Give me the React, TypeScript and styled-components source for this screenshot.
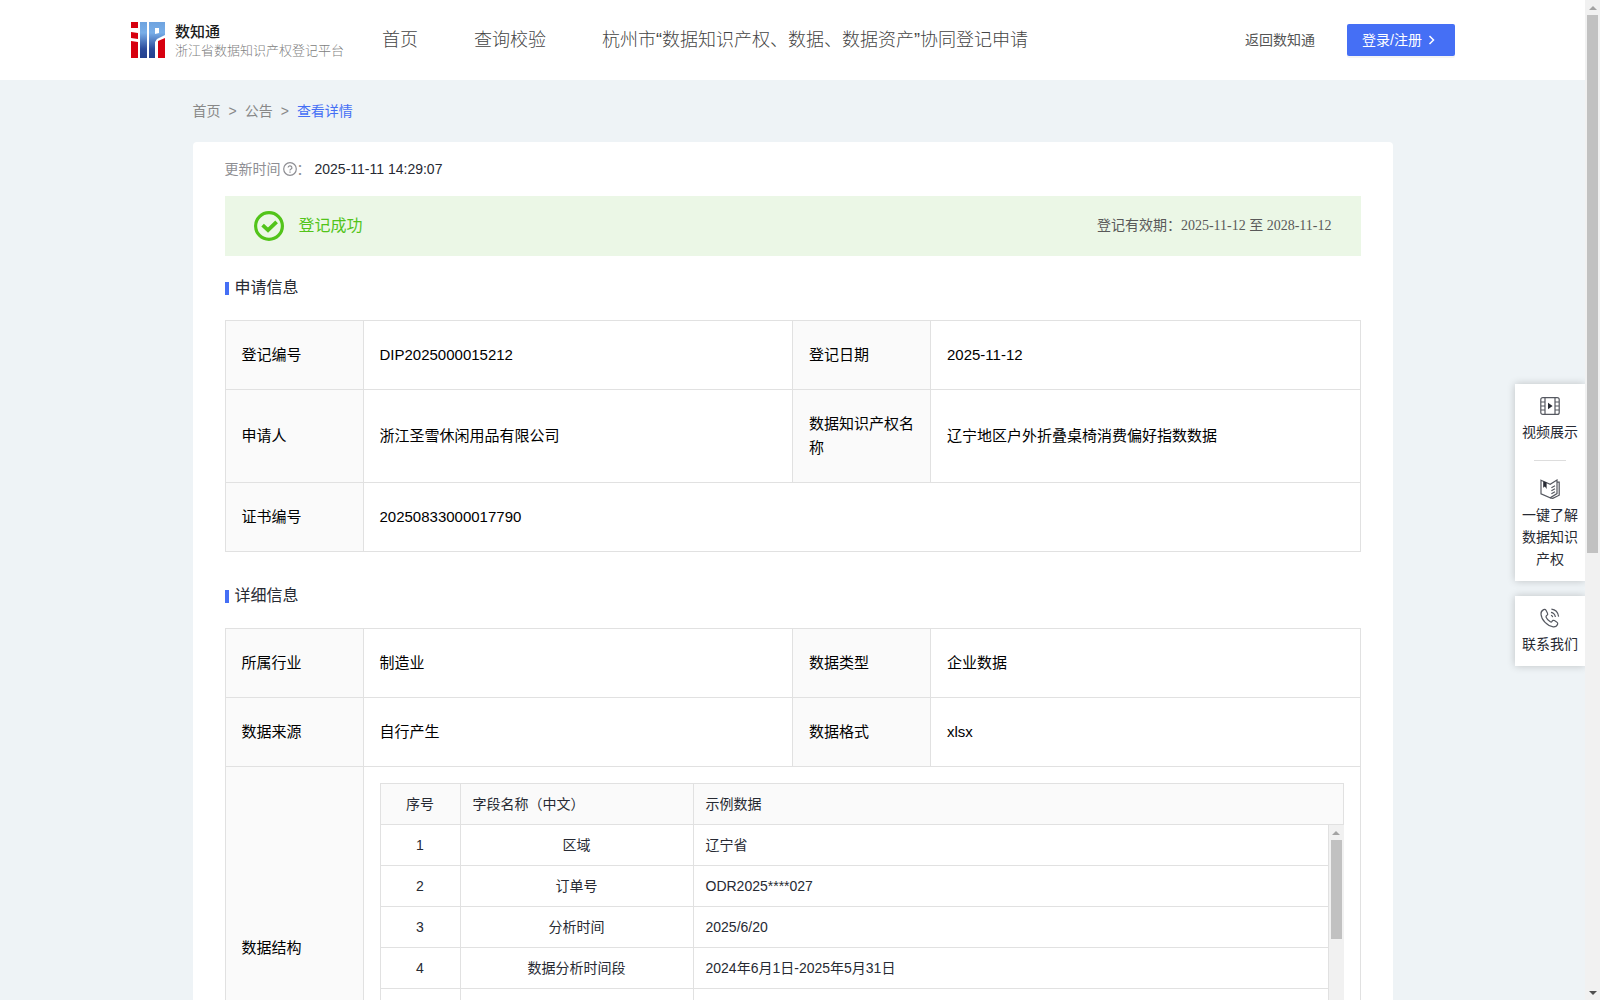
import React from 'react';
import styled, { createGlobalStyle } from 'styled-components';

const sans = '"Liberation Sans", "Noto Sans CJK SC", sans-serif';
const serif = '"Liberation Serif", "Noto Sans CJK SC", serif';
const ink = '#272a33';
const line = '#e1e1e1';
const blue = '#456ff5';

const GlobalStyle = createGlobalStyle`
  * { box-sizing: border-box; }
  body { margin: 0; font-family: ${sans}; font-size: 14px; line-height: 22px; color: ${ink}; }
  a { color: inherit; text-decoration: none; }
  table { border-collapse: collapse; table-layout: fixed; width: 100%; }
`;

const Shell = styled.div`
  position: relative;
  display: flex;
  height: 100vh;
  overflow: hidden;
  background: #eef3f6;
`;
const Page = styled.div`
  flex: 1;
  min-width: 0;
  overflow-y: auto;
  scrollbar-width: none;
`;
const Header = styled.header`
  display: flex;
  align-items: center;
  height: 80px;
  padding: 0 130px;
  background: #fff;
`;
const Brand = styled.a`
  display: flex;
  align-items: center;
  gap: 9px;
`;
const BrandText = styled.span`
  display: flex;
  flex-direction: column;
  width: 163px;
  white-space: nowrap;
`;
const BrandName = styled.span`
  font: 500 15px/20px "Noto Sans CJK SC", sans-serif;
  color: #1b1b1b;
`;
const BrandSub = styled.span`
  font: 300 13px/18px "Noto Sans CJK SC", sans-serif;
  color: #808080;
`;
const Nav = styled.nav`
  display: flex;
  gap: 56px;
  margin-left: 44px;
  font-size: 18px;
  font-weight: 300;
  line-height: 28px;
  color: #444;
  white-space: nowrap;
`;
const Actions = styled.div`
  display: flex;
  align-items: center;
  gap: 32px;
  margin-left: auto;
  color: #555;
`;
const LoginButton = styled.button`
  display: flex;
  align-items: center;
  gap: 2px;
  height: 32px;
  padding: 0 15px;
  border: 0;
  border-radius: 2px;
  background: ${blue};
  box-shadow: 0 2px 0 rgba(0, 0, 0, 0.045);
  color: #fff;
  font: 400 14px/22px ${sans};
`;
const Content = styled.main`
  width: 1200px;
  max-width: 100%;
  margin: 0 auto;
`;
const Breadcrumb = styled.nav`
  display: flex;
  gap: 8px;
  padding: 20px 0;
  color: #888;
`;
const Current = styled.a`
  && { color: ${blue}; }
`;
const Card = styled.section`
  padding: 16px 32px 32px;
  border-radius: 4px;
  background: #fff;
`;
const Updated = styled.div`
  display: flex;
  align-items: center;
  margin-bottom: 16px;
  color: #8e8e93;
  svg { margin-left: 2px; }
`;
const UpdatedValue = styled.span`
  margin-left: 4px;
  color: ${ink};
`;
const Banner = styled.div`
  display: flex;
  align-items: center;
  gap: 15px;
  height: 60px;
  padding: 0 29px;
  background: #ebf7e6;
  color: #52c41a;
  font-size: 16px;
`;
const Validity = styled.span`
  margin-left: auto;
  font: 400 14px/22px ${serif};
  color: #595959;
`;
const SectionTitle = styled.h2`
  display: flex;
  align-items: center;
  gap: 6px;
  margin: ${(p: { $first?: boolean }) => (p.$first ? '20px' : '32px')} 0 20px;
  font-size: 16px;
  font-weight: 400;
  line-height: 24px;
  &::before {
    content: "";
    width: 4px;
    height: 13px;
    background: ${blue};
  }
`;
const InfoTable = styled.table`
  color: #000;
  font-size: 15px;
  line-height: 24px;
`;
const LabelCell = styled.th`
  padding: 22px 16px;
  border: 1px solid ${line};
  background: #fafafa;
  font-weight: 400;
  text-align: left;
`;
const ValueCell = styled.td`
  padding: ${(p: { $nested?: boolean }) => (p.$nested ? '16px' : '22px 16px')};
  border: 1px solid ${line};
`;
const FieldTable = styled.table`
  color: ${ink};
  font-size: 14px;
  line-height: 22px;
`;
const FieldHead = styled.th`
  height: 41px;
  padding: 0 12px;
  border: 1px solid ${line};
  background: #fafafa;
  font-weight: 400;
  text-align: ${(p: { $center?: boolean }) => (p.$center ? 'center' : 'left')};
`;
const FieldCell = styled.td`
  height: 41px;
  padding: 0 12px;
  border: 1px solid ${line};
  border-top: 0;
  text-align: ${(p: { $center?: boolean }) => (p.$center ? 'center' : 'left')};
  tr:first-child > & { height: 40px; }
`;
const FieldBody = styled.div`
  display: flex;
  height: 287px;
`;
const FieldScroll = styled.div`
  flex: 1;
  min-width: 0;
  overflow-y: auto;
  scrollbar-width: none;
`;
const Track = styled.div`
  display: flex;
  flex-direction: column;
  align-items: center;
  width: 15px;
  flex: none;
  background: #f1f1f1;
`;
const Arrow = styled.span`
  display: grid;
  place-items: center;
  height: 15px;
  flex: none;
  &::after {
    content: "";
    border: 4px solid transparent;
    ${(p: { $down?: boolean }) =>
      p.$down
        ? 'border-top-color: #505050; border-bottom: 0;'
        : 'border-bottom-color: #a3a3a3; border-top: 0;'}
  }
`;
const Groove = styled.div`
  flex: 1;
  width: 11px;
`;
const Thumb = styled.div<{ $share: string }>`
  height: ${(p) => p.$share};
  background: #c1c1c1;
`;
const Dock = styled.aside`
  position: absolute;
  top: 384px;
  right: 15px;
  display: flex;
  flex-direction: column;
  gap: 15px;
  width: 70px;
`;
const DockGroup = styled.div`
  display: flex;
  flex-direction: column;
  align-items: center;
  padding: 12px 6px 11px;
  background: #fff;
  box-shadow: 0 0 8px rgba(0, 0, 0, 0.2);
  clip-path: inset(-12px 0 -12px -12px);
`;
const DockItem = styled.a`
  display: flex;
  flex-direction: column;
  align-items: center;
  gap: 5px;
  text-align: center;
`;
const DockRule = styled.hr`
  width: 32px;
  height: 1px;
  margin: 17px 0 18px;
  border: 0;
  background: #ddd;
`;

const Logo = () => (
  <svg width="36" height="36" viewBox="0 0 36 36" aria-hidden="true">
    <defs>
      <linearGradient id="logoBlue" x1="0" y1="0" x2="0" y2="1">
        <stop offset="0" stopColor="#6ea3df" />
        <stop offset="0.3" stopColor="#78aee8" />
        <stop offset="0.75" stopColor="#2b4b9b" />
        <stop offset="1" stopColor="#23418f" />
      </linearGradient>
    </defs>
    <path fill="#d7000f" d="M1 0h7v6H1zM1 10l7 1v6l-7-1zM1 19l7 1v16H1zM28 19l7-3v20h-7z" />
    <path fill="url(#logoBlue)" fillRule="evenodd" d="M10 0h7v36h-7zM19 0h16v13l-8 4-2 3v16h-6zM25 6v6l4-1V6z" />
  </svg>
);
const Chevron = () => (
  <svg width="16" height="16" viewBox="0 0 16 16" fill="none" stroke="currentColor" strokeWidth="1.5" aria-hidden="true">
    <path d="M5.500 4l4 4-4 4" />
  </svg>
);
const Help = () => (
  <svg width="14" height="14" viewBox="0 0 14 14" fill="none" stroke="currentColor" strokeWidth="1.2" aria-hidden="true">
    <circle cx="7" cy="7" r="6.3" />
    <path d="M5.1 5.6a1.9 1.7 0 1 1 2.7 1.6c-.5.25-.8.5-.8 1.1v.3M7 9.6v1.2" />
  </svg>
);
const Success = () => (
  <svg width="30" height="30" viewBox="0 0 30 30" fill="none" stroke="#52c41a" aria-hidden="true">
    <circle cx="15" cy="15" r="13.4" strokeWidth="3.2" />
    <path d="M8.600 14.200l5.400 4.900 8.600-8.300" strokeWidth="3.8" />
  </svg>
);
const dockSvg = {
  width: 20,
  height: 20,
  viewBox: '0 0 20 20',
  fill: 'none',
  stroke: '#555860',
  strokeWidth: 1.2,
  'aria-hidden': true,
} as const;
const Film = () => (
  <svg {...dockSvg}>
    <rect x="0.8" y="1.6" width="18.4" height="16.8" rx="2" />
    <path d="M5 1.6v16.8M15 1.6v16.8M1 6h4M1 10h4M1 14h4M15 6h4M15 10h4M15 14h4" />
    <path d="M8 6.8v6.4l4.6-3.2z" fill={ink} stroke="none" />
  </svg>
);
const Book = () => (
  <svg {...dockSvg}>
    <path d="M1 1.200l9.200 4L17 1v13.600l-6.800 4.200L1 14.800z" />
    <path d="M17 3.200h2.200v13l-6.400 3.200-2.600-.6" />
    <path d="M3.200 2.200v6.600l1.700-1.200 1.700 2.400V3.600z" fill={ink} stroke="none" />
    <path d="M11.400 8.800l3.600-2M11.400 11.800l3.600-2M11.400 14.800l3.600-2" />
  </svg>
);
const Phone = () => (
  <svg {...dockSvg}>
    <path d="M3.600 1.600c-1.600.8-2.800 2.400-2.600 4.600.4 5.800 6.400 12 12.200 12.600 2.200.2 3.800-1 4.400-2.600.3-.8.1-1.600-.6-2l-2.600-1.600c-1-.6-1.800-.2-2.400.8-.4.6-1 .8-1.700.4-2-1.200-3.400-2.800-4.200-4.600-.3-.7 0-1.200.6-1.600 1-.6 1.300-1.400.8-2.400L6 2.200c-.5-.9-1.500-1-2.400-.6z" />
    <path d="M11 4.400c2.400.4 4 2 4.400 4.600M11.400 1.200c4 .4 6.600 3.200 7.200 7.400M11 7.200c1 .3 1.500 1 1.700 2" />
  </svg>
);

const fields = [
  ['1', '区域', '辽宁省'],
  ['2', '订单号', 'ODR2025****027'],
  ['3', '分析时间', '2025/6/20'],
  ['4', '数据分析时间段', '2024年6月1日-2025年5月31日'],
  ['', '', ''],
  ['', '', ''],
  ['', '', ''],
];

const InfoCols = () => (
  <colgroup>
    <col width="138" />
    <col />
    <col width="138" />
    <col />
  </colgroup>
);
const FieldCols = () => (
  <colgroup>
    <col width="80" />
    <col width="233" />
    <col />
  </colgroup>
);

type Pair = [string, string];
const PairRow = ({ cells }: { cells: Pair[] }) => (
  <tr>
    {cells.map(([label, value]) => (
      <React.Fragment key={label}>
        <LabelCell scope="row">{label}</LabelCell>
        <ValueCell colSpan={cells.length === 1 ? 3 : 1}>{value}</ValueCell>
      </React.Fragment>
    ))}
  </tr>
);

export default function App() {
  return (
    <Shell>
      <GlobalStyle />
      <Page>
        <Header>
          <Brand href="#">
            <Logo />
            <BrandText>
              <BrandName>数知通</BrandName>
              <BrandSub>浙江省数据知识产权登记平台</BrandSub>
            </BrandText>
          </Brand>
          <Nav>
            <a href="#">首页</a>
            <a href="#">查询校验</a>
            <a href="#">杭州市“数据知识产权、数据、数据资产”协同登记申请</a>
          </Nav>
          <Actions>
            <a href="#">返回数知通</a>
            <LoginButton type="button">
              登录/注册
              <Chevron />
            </LoginButton>
          </Actions>
        </Header>
        <Content>
          <Breadcrumb>
            <a href="#">首页</a>
            <span>&gt;</span>
            <a href="#">公告</a>
            <span>&gt;</span>
            <Current href="#">查看详情</Current>
          </Breadcrumb>
          <Card>
            <Updated>
              更新时间
              <Help />
              ：<UpdatedValue>2025-11-11 14:29:07</UpdatedValue>
            </Updated>
            <Banner>
              <Success />
              登记成功
              <Validity>登记有效期：2025-11-12 至 2028-11-12</Validity>
            </Banner>
            <SectionTitle $first>申请信息</SectionTitle>
            <InfoTable>
              <InfoCols />
              <tbody>
                <PairRow cells={[['登记编号', 'DIP2025000015212'], ['登记日期', '2025-11-12']]} />
                <PairRow
                  cells={[
                    ['申请人', '浙江圣雪休闲用品有限公司'],
                    ['数据知识产权名称', '辽宁地区户外折叠桌椅消费偏好指数数据'],
                  ]}
                />
                <PairRow cells={[['证书编号', '20250833000017790']]} />
              </tbody>
            </InfoTable>
            <SectionTitle>详细信息</SectionTitle>
            <InfoTable>
              <InfoCols />
              <tbody>
                <PairRow cells={[['所属行业', '制造业'], ['数据类型', '企业数据']]} />
                <PairRow cells={[['数据来源', '自行产生'], ['数据格式', 'xlsx']]} />
                <tr>
                  <LabelCell scope="row">数据结构</LabelCell>
                  <ValueCell colSpan={3} $nested>
                    <FieldTable>
                      <FieldCols />
                      <thead>
                        <tr>
                          <FieldHead $center>序号</FieldHead>
                          <FieldHead>字段名称（中文）</FieldHead>
                          <FieldHead>示例数据</FieldHead>
                        </tr>
                      </thead>
                    </FieldTable>
                    <FieldBody>
                      <FieldScroll>
                        <FieldTable>
                          <FieldCols />
                          <tbody>
                            {fields.map(([no, name, sample], i) => (
                              <tr key={i}>
                                <FieldCell $center>{no}</FieldCell>
                                <FieldCell $center>{name}</FieldCell>
                                <FieldCell>{sample}</FieldCell>
                              </tr>
                            ))}
                          </tbody>
                        </FieldTable>
                      </FieldScroll>
                      <Track>
                        <Arrow />
                        <Groove>
                          <Thumb $share="38.5%" />
                        </Groove>
                        <Arrow $down />
                      </Track>
                    </FieldBody>
                  </ValueCell>
                </tr>
              </tbody>
            </InfoTable>
          </Card>
        </Content>
      </Page>
      <Track>
        <Arrow />
        <Groove>
          <Thumb $share="55.5%" />
        </Groove>
        <Arrow $down />
      </Track>
      <Dock>
        <DockGroup>
          <DockItem href="#">
            <Film />
            视频展示
          </DockItem>
          <DockRule />
          <DockItem href="#">
            <Book />
            一键了解数据知识产权
          </DockItem>
        </DockGroup>
        <DockGroup>
          <DockItem href="#">
            <Phone />
            联系我们
          </DockItem>
        </DockGroup>
      </Dock>
    </Shell>
  );
}
